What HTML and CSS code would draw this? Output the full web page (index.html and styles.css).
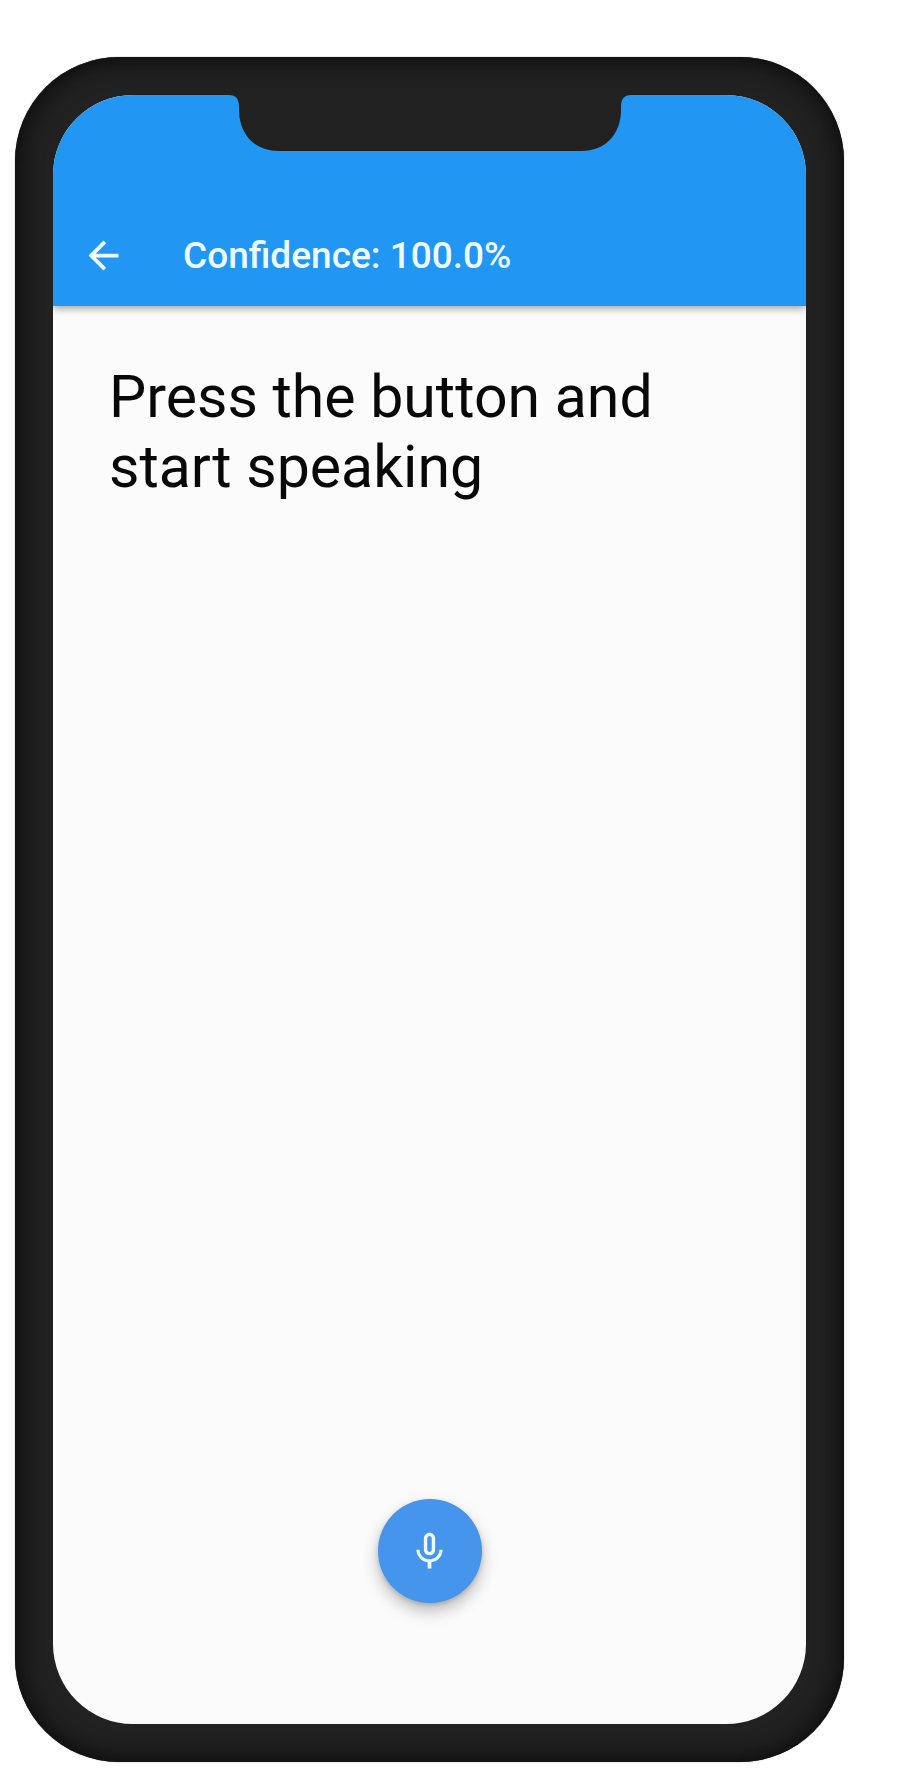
FILE: index.html
```html
<!DOCTYPE html>
<html lang="en">
<head>
  <meta charset="utf-8">
  <meta name="viewport" content="width=device-width, initial-scale=1">
  <title>Confidence</title>
  <link rel="stylesheet" href="styles.css">
</head>
<body>
  <div class="stage">
    <div class="device">
      <div class="screen">
        <svg class="notch" viewBox="0 0 402 56" aria-hidden="true">
          <path d="M0 0C7 0 10 4 10 12V17C11 39 25 56 50 56H352C377 56 391 39 392 17V12C392 4 395 0 402 0Z"/>
        </svg>
        <header class="app-bar">
          <button class="back" type="button" aria-label="Back">
            <svg class="icon" viewBox="0 0 24 24" aria-hidden="true"><path d="M20 11H7.83l5.59-5.59L12 4l-8 8 8 8 1.41-1.41L7.83 13H20v-2z"/></svg>
          </button>
          <h1 class="title">Confidence: 100.0%</h1>
        </header>
        <main class="content">
          <p class="transcript">Press the button and start speaking</p>
          <button class="mic" type="button" aria-label="Start speaking">
            <svg class="icon" viewBox="0 0 24 24" aria-hidden="true"><path d="M12 14c1.66 0 3-1.34 3-3V5c0-1.66-1.34-3-3-3S9 3.340 9 5v6c0 1.660 1.340 3 3 3zm-1.200-9.100c0-.66.54-1.200 1.200-1.200s1.200.54 1.200 1.200l-.01 6.200c0 .66-.53 1.200-1.190 1.200s-1.200-.54-1.200-1.200V4.900zm6.500 6.100c0 3-2.540 5.100-5.300 5.100S6.700 14 6.700 11H5c0 3.410 2.720 6.230 6 6.720V21h2v-3.280c3.280-.48 6-3.300 6-6.720h-1.700z"/></svg>
          </button>
        </main>
      </div>
    </div>
  </div>
</body>
</html>
```
FILE: styles.css
```css
* {
  box-sizing: border-box;
}

body {
  margin: 0;
  background: #fff;
  font-family: Roboto, "Liberation Sans", sans-serif;
}

.stage {
  display: flex;
  min-height: 100vh;
  padding: 57px 80px 29px 15px;
}

.device {
  display: flex;
  flex: 1;
  padding: 38px;
  border-radius: 104px;
  background: #212121;
  box-shadow: inset 0 0 24px 2px #080808, 0 0 1px #444;
}

.screen {
  position: relative;
  display: flex;
  flex: 1;
  flex-direction: column;
  overflow: hidden;
  border-radius: 80px;
  background: #fbfbfb;
}

.notch {
  position: absolute;
  z-index: 2;
  top: 0;
  left: 50%;
  width: 402px;
  transform: translateX(-50%);
  fill: #212121;
}

.app-bar {
  display: flex;
  align-items: center;
  gap: 57px;
  padding: 134px 28px 24px;
  background: #2196f3;
  box-shadow: 0 2px 8px rgba(0, 0, 0, 0.4);
}

.icon {
  display: block;
  width: 45px;
  height: 45px;
  fill: currentColor;
}

.back {
  padding: 4px 0;
  border: 0;
  background: none;
  color: #effcff;
}

.title {
  margin: 0;
  color: #effcff;
  font-size: 37px;
  font-weight: 500;
  line-height: 48px;
}

.content {
  display: flex;
  flex: 1;
  flex-direction: column;
  align-items: center;
  justify-content: space-between;
  padding: 56px 56px 121px;
}

.transcript {
  align-self: stretch;
  margin: 0;
  color: #080808;
  font-size: 59px;
  line-height: 70px;
}

.mic {
  display: grid;
  width: 104px;
  height: 104px;
  padding: 0;
  place-items: center;
  border: 0;
  border-radius: 50%;
  background: #4595ec;
  box-shadow: 0 8px 16px rgba(0, 0, 0, 0.25), 0 2px 4px rgba(0, 0, 0, 0.15);
  color: #effcff;
}
```
